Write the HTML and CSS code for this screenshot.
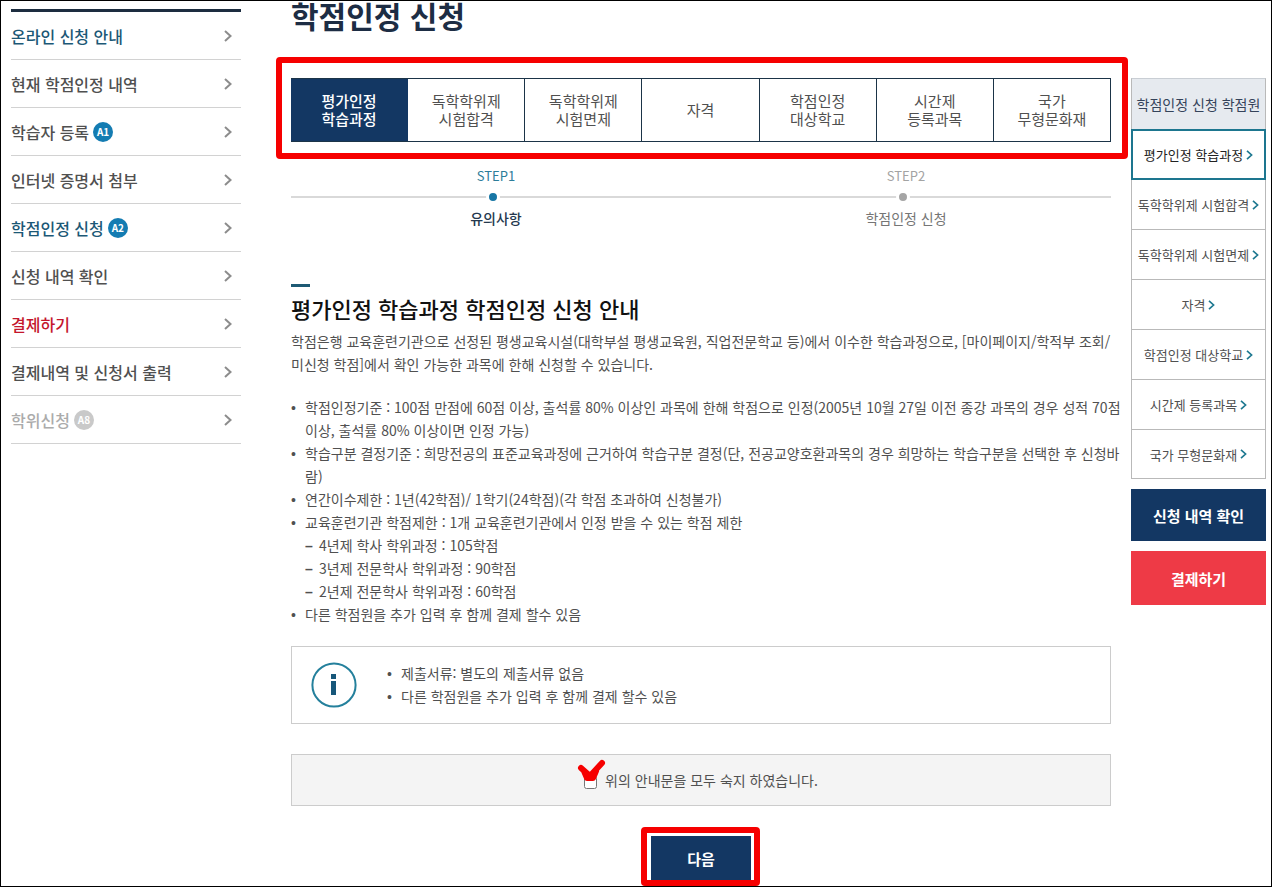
FILE: index.html
```html
<!DOCTYPE html>
<html lang="ko">
<head>
<meta charset="utf-8">
<meta name="viewport" content="width=device-width, initial-scale=1">
<title>학점인정 신청</title>
<link rel="stylesheet" href="styles.css">
</head>
<body>
<svg class="defs" aria-hidden="true">
  <symbol id="chevron" viewBox="0 0 8 12"><path d="M1 1l5.500 5L1 11" fill="none" stroke="currentColor" stroke-width="2"/></symbol>
</svg>
<div class="page">
  <nav class="side" aria-label="학점인정 메뉴">
    <ul class="side-list">
      <li><a class="side-link is-blue" href="#"><span>온라인 신청 안내</span><svg class="side-arrow"><use href="#chevron"/></svg></a></li>
      <li><a class="side-link" href="#"><span>현재 학점인정 내역</span><svg class="side-arrow"><use href="#chevron"/></svg></a></li>
      <li><a class="side-link" href="#"><span>학습자 등록</span><span class="badge">A1</span><svg class="side-arrow"><use href="#chevron"/></svg></a></li>
      <li><a class="side-link" href="#"><span>인터넷 증명서 첨부</span><svg class="side-arrow"><use href="#chevron"/></svg></a></li>
      <li><a class="side-link is-blue" href="#"><span>학점인정 신청</span><span class="badge">A2</span><svg class="side-arrow"><use href="#chevron"/></svg></a></li>
      <li><a class="side-link" href="#"><span>신청 내역 확인</span><svg class="side-arrow"><use href="#chevron"/></svg></a></li>
      <li><a class="side-link is-red" href="#"><span>결제하기</span><svg class="side-arrow"><use href="#chevron"/></svg></a></li>
      <li><a class="side-link" href="#"><span>결제내역 및 신청서 출력</span><svg class="side-arrow"><use href="#chevron"/></svg></a></li>
      <li><a class="side-link is-off" href="#"><span>학위신청</span><span class="badge">A8</span><svg class="side-arrow"><use href="#chevron"/></svg></a></li>
    </ul>
  </nav>

  <main class="main">
    <h1 class="title">학점인정 신청</h1>

    <div class="tabs-wrap">
      <nav class="tabs" aria-label="학점원 종류">
        <a class="tab is-active" href="#">평가인정<br>학습과정</a>
        <a class="tab" href="#">독학학위제<br>시험합격</a>
        <a class="tab" href="#">독학학위제<br>시험면제</a>
        <a class="tab" href="#">자격</a>
        <a class="tab" href="#">학점인정<br>대상학교</a>
        <a class="tab" href="#">시간제<br>등록과목</a>
        <a class="tab" href="#">국가<br>무형문화재</a>
      </nav>
      <span class="mark mark-tabs"></span>
    </div>

    <ol class="steps">
      <li class="step is-current"><span class="step-no">STEP1</span><span class="step-line"><i class="dot"></i></span><span class="step-name">유의사항</span></li>
      <li class="step"><span class="step-no">STEP2</span><span class="step-line"><i class="dot"></i></span><span class="step-name">학점인정 신청</span></li>
    </ol>

    <h2 class="heading">평가인정 학습과정 학점인정 신청 안내</h2>
    <p class="lead">학점은행 교육훈련기관으로 선정된 평생교육시설(대학부설 평생교육원, 직업전문학교 등)에서 이수한 학습과정으로, [마이페이지/학적부 조회/미신청 학점]에서 확인 가능한 과목에 한해 신청할 수 있습니다.</p>

    <ul class="bullets bullets-guide">
      <li>학점인정기준 : 100점 만점에 60점 이상, 출석률 80% 이상인 과목에 한해 학점으로 인정(2005년 10월 27일 이전 종강 과목의 경우 성적 70점 이상, 출석률 80% 이상이면 인정 가능)</li>
      <li>학습구분 결정기준 : 희망전공의 표준교육과정에 근거하여 학습구분 결정(단, 전공교양호환과목의 경우 희망하는 학습구분을 선택한 후 신청바람)</li>
      <li>연간이수제한 : 1년(42학점)/ 1학기(24학점)(각 학점 초과하여 신청불가)</li>
      <li>교육훈련기관 학점제한 : 1개 교육훈련기관에서 인정 받을 수 있는 학점 제한
        <ul class="dashes">
          <li>4년제 학사 학위과정 : 105학점</li>
          <li>3년제 전문학사 학위과정 : 90학점</li>
          <li>2년제 전문학사 학위과정 : 60학점</li>
        </ul>
      </li>
      <li>다른 학점원을 추가 입력 후 함께 결제 할수 있음</li>
    </ul>

    <section class="info">
      <svg class="info-icon" viewBox="0 0 46 46" aria-hidden="true">
        <circle cx="23" cy="23" r="21.6" fill="none" stroke="#24809c" stroke-width="2"/>
        <path fill="#17577a" d="M20 12h5v5h-5zM20 19h5v14h-5z"/>
      </svg>
      <ul class="bullets">
        <li>제출서류: 별도의 제출서류 없음</li>
        <li>다른 학점원을 추가 입력 후 함께 결제 할수 있음</li>
      </ul>
    </section>

    <div class="agree">
      <span class="check-wrap">
        <input class="check" type="checkbox" id="agree">
        <svg class="check-mark" viewBox="0 0 30 26" aria-hidden="true"><path d="M5 10l9 8L26 5M8 13l3 7h6l3-7M12 17h4" fill="none" stroke="#f60000" stroke-width="6" stroke-linecap="round" stroke-linejoin="round"/></svg>
      </span>
      <label for="agree">위의 안내문을 모두 숙지 하였습니다.</label>
    </div>

    <div class="actions">
      <div class="next-wrap">
        <button class="next" type="button">다음</button>
        <span class="mark mark-next"></span>
      </div>
    </div>
  </main>

  <aside class="quick">
    <div class="quick-box">
      <h2 class="quick-title">학점인정 신청 학점원</h2>
      <a class="quick-link is-active" href="#">평가인정 학습과정<svg class="quick-arrow"><use href="#chevron"/></svg></a>
      <a class="quick-link" href="#">독학학위제 시험합격<svg class="quick-arrow"><use href="#chevron"/></svg></a>
      <a class="quick-link" href="#">독학학위제 시험면제<svg class="quick-arrow"><use href="#chevron"/></svg></a>
      <a class="quick-link" href="#">자격<svg class="quick-arrow"><use href="#chevron"/></svg></a>
      <a class="quick-link" href="#">학점인정 대상학교<svg class="quick-arrow"><use href="#chevron"/></svg></a>
      <a class="quick-link" href="#">시간제 등록과목<svg class="quick-arrow"><use href="#chevron"/></svg></a>
      <a class="quick-link" href="#">국가 무형문화재<svg class="quick-arrow"><use href="#chevron"/></svg></a>
    </div>
    <button class="quick-button" type="button">신청 내역 확인</button>
    <button class="quick-button is-pay" type="button">결제하기</button>
  </aside>
</div>
</body>
</html>
```
FILE: styles.css
```css
* { box-sizing: border-box; }
body, h1, h2, p, ul, ol { margin: 0; padding: 0; }
ul, ol { list-style: none; }
a { color: inherit; text-decoration: none; }
button { border: 0; padding: 0; font: inherit; cursor: pointer; }

body {
  font-family: "Noto Sans CJK KR", "Noto Sans", sans-serif;
  font-size: 14px;
  line-height: 23px;
  color: #505050;
  background: #fff;
}

.defs { display: none; }

.page {
  display: grid;
  grid-template-columns: 230px minmax(0, 1fr) 135px;
  min-height: 100vh;
  padding: 0 5px 5px 10px;
  border: 1px solid #000;
}

/* Left menu */
.side { padding-top: 8px; }
.side-list { border-top: 3px solid #1d2d40; }
.side-link {
  display: flex;
  align-items: center;
  gap: 4px;
  height: 48px;
  padding: 1px 9px 0 0;
  border-bottom: 1px solid #d2d2d2;
  font-size: 16px;
  font-weight: 500;
}
.side-arrow { width: 8px; height: 12px; margin-left: auto; color: #8c8c8c; }
.badge {
  width: 20px;
  height: 20px;
  border-radius: 50%;
  background: #147cb2;
  color: #fff;
  font-size: 10px;
  font-weight: 700;
  line-height: 20px;
  text-align: center;
}
.is-blue { color: #1c5876; }
.is-red { color: #c4162c; }
.is-off { color: #ababab; }
.is-off .badge { background: #c9c9c9; }

/* Centre column */
.main { padding: 0 20px 0 50px; }
.title {
  padding-bottom: 49px;
  font-size: 30px;
  line-height: 28px;
  font-weight: 700;
  color: #1d2d44;
}

.tabs-wrap { position: relative; }
.tabs {
  display: grid;
  grid-template-columns: repeat(7, 1fr);
  height: 64px;
  border: solid #1b3448;
  border-width: 1px 0;
}
.tab {
  display: flex;
  align-items: center;
  justify-content: center;
  border-right: 1px solid #1b3448;
  font-size: 15px;
  line-height: 18px;
  text-align: center;
}
.tab.is-active { border-color: #133763; background: #133763; color: #fff; font-weight: 500; }

.mark {
  position: absolute;
  border: 6px solid #f60000;
  border-radius: 4px;
  pointer-events: none;
}
.mark-tabs { inset: -21px -17px -17px -15px; }
.mark-next { inset: -9px -9px -6px -10px; }

.steps { display: grid; grid-template-columns: 1fr 1fr; padding-top: 23px; }
.step { display: flex; flex-direction: column; text-align: center; color: #757575; }
.step-no { padding-bottom: 1px; font-size: 13px; color: #a3a3a3; line-height: 22px; }
.step-line {
  display: flex;
  justify-content: center;
  padding: 2px 6px 2px 0;
  background: linear-gradient(#d9d9d9, #d9d9d9) center / 100% 2px no-repeat;
}
.dot {
  width: 14px;
  height: 14px;
  border: 3px solid #fff;
  border-radius: 50%;
  background: #a5a5a5;
}
.step-name { padding-bottom: 2px; line-height: 24px; }
.is-current .step-no { color: #2c7d9a; }
.is-current .dot { background: #1776a5; }
.is-current .step-name { color: #24384e; font-weight: 500; }

.heading {
  margin-top: 52px;
  font-size: 22px;
  line-height: 32px;
  font-weight: 500;
  color: #111;
}
.heading::before {
  content: "";
  display: block;
  width: 19px;
  height: 3px;
  margin-bottom: 5px;
  background: #1e5a74;
}
.lead { padding: 6px 0 20px; }

.bullets > li, .dashes > li { padding-left: 14px; }
.bullets > li::before, .dashes > li::before {
  display: inline-block;
  width: 14px;
  margin-left: -14px;
  font-family: "Liberation Sans", sans-serif;
  line-height: 1;
}
.bullets > li::before { content: "•"; }
.dashes > li::before { content: "–"; font-weight: 700; }
.bullets-guide { margin-right: -14px; }

.info {
  display: flex;
  align-items: center;
  gap: 30px;
  margin-top: 20px;
  padding: 15px 19px;
  border: 1px solid #ccc;
}
.info-icon { width: 46px; height: 46px; }

.agree {
  display: flex;
  align-items: center;
  justify-content: center;
  gap: 8px;
  height: 52px;
  margin-top: 30px;
  border: 1px solid #ccc;
  background: #f4f4f4;
}
.check-wrap { position: relative; display: flex; padding-top: 4px; }
.check { width: 13px; height: 13px; margin: 0; }
.check-mark { position: absolute; left: -8px; top: -14px; width: 30px; height: 26px; pointer-events: none; }

.actions { display: flex; justify-content: center; padding-top: 30px; }
.next-wrap { position: relative; }
.next { display: block; width: 100px; height: 44px; background: #133763; color: #fff; font-size: 15px; font-weight: 700; }

/* Right shortcuts */
.quick { display: flex; flex-direction: column; gap: 10px; padding-top: 77px; }
.quick-box { border: 1px solid #b9b9b9; border-top-color: #c9ced4; }
.quick-title {
  height: 50px;
  background: #e6eaef;
  color: #34435a;
  font-size: 14px;
  font-weight: 400;
  line-height: 50px;
  text-align: center;
  white-space: nowrap;
}
.quick-link {
  display: flex;
  align-items: center;
  justify-content: center;
  gap: 3px;
  height: 50px;
  border-bottom: 1px solid #b9b9b9;
  font-size: 13px;
  white-space: nowrap;
}
.quick-link:last-child { height: 48px; border-bottom: 0; }
.quick-link.is-active { height: 51px; margin: 0 -1px; border: 2px solid #1d768f; color: #222; }
.quick-arrow { width: 7px; height: 10px; color: #1d7890; }
.quick-button { height: 52px; background: #133763; color: #fff; font-size: 15px; font-weight: 700; }
.quick-button.is-pay { height: 54px; background: #ee3a46; }
```
